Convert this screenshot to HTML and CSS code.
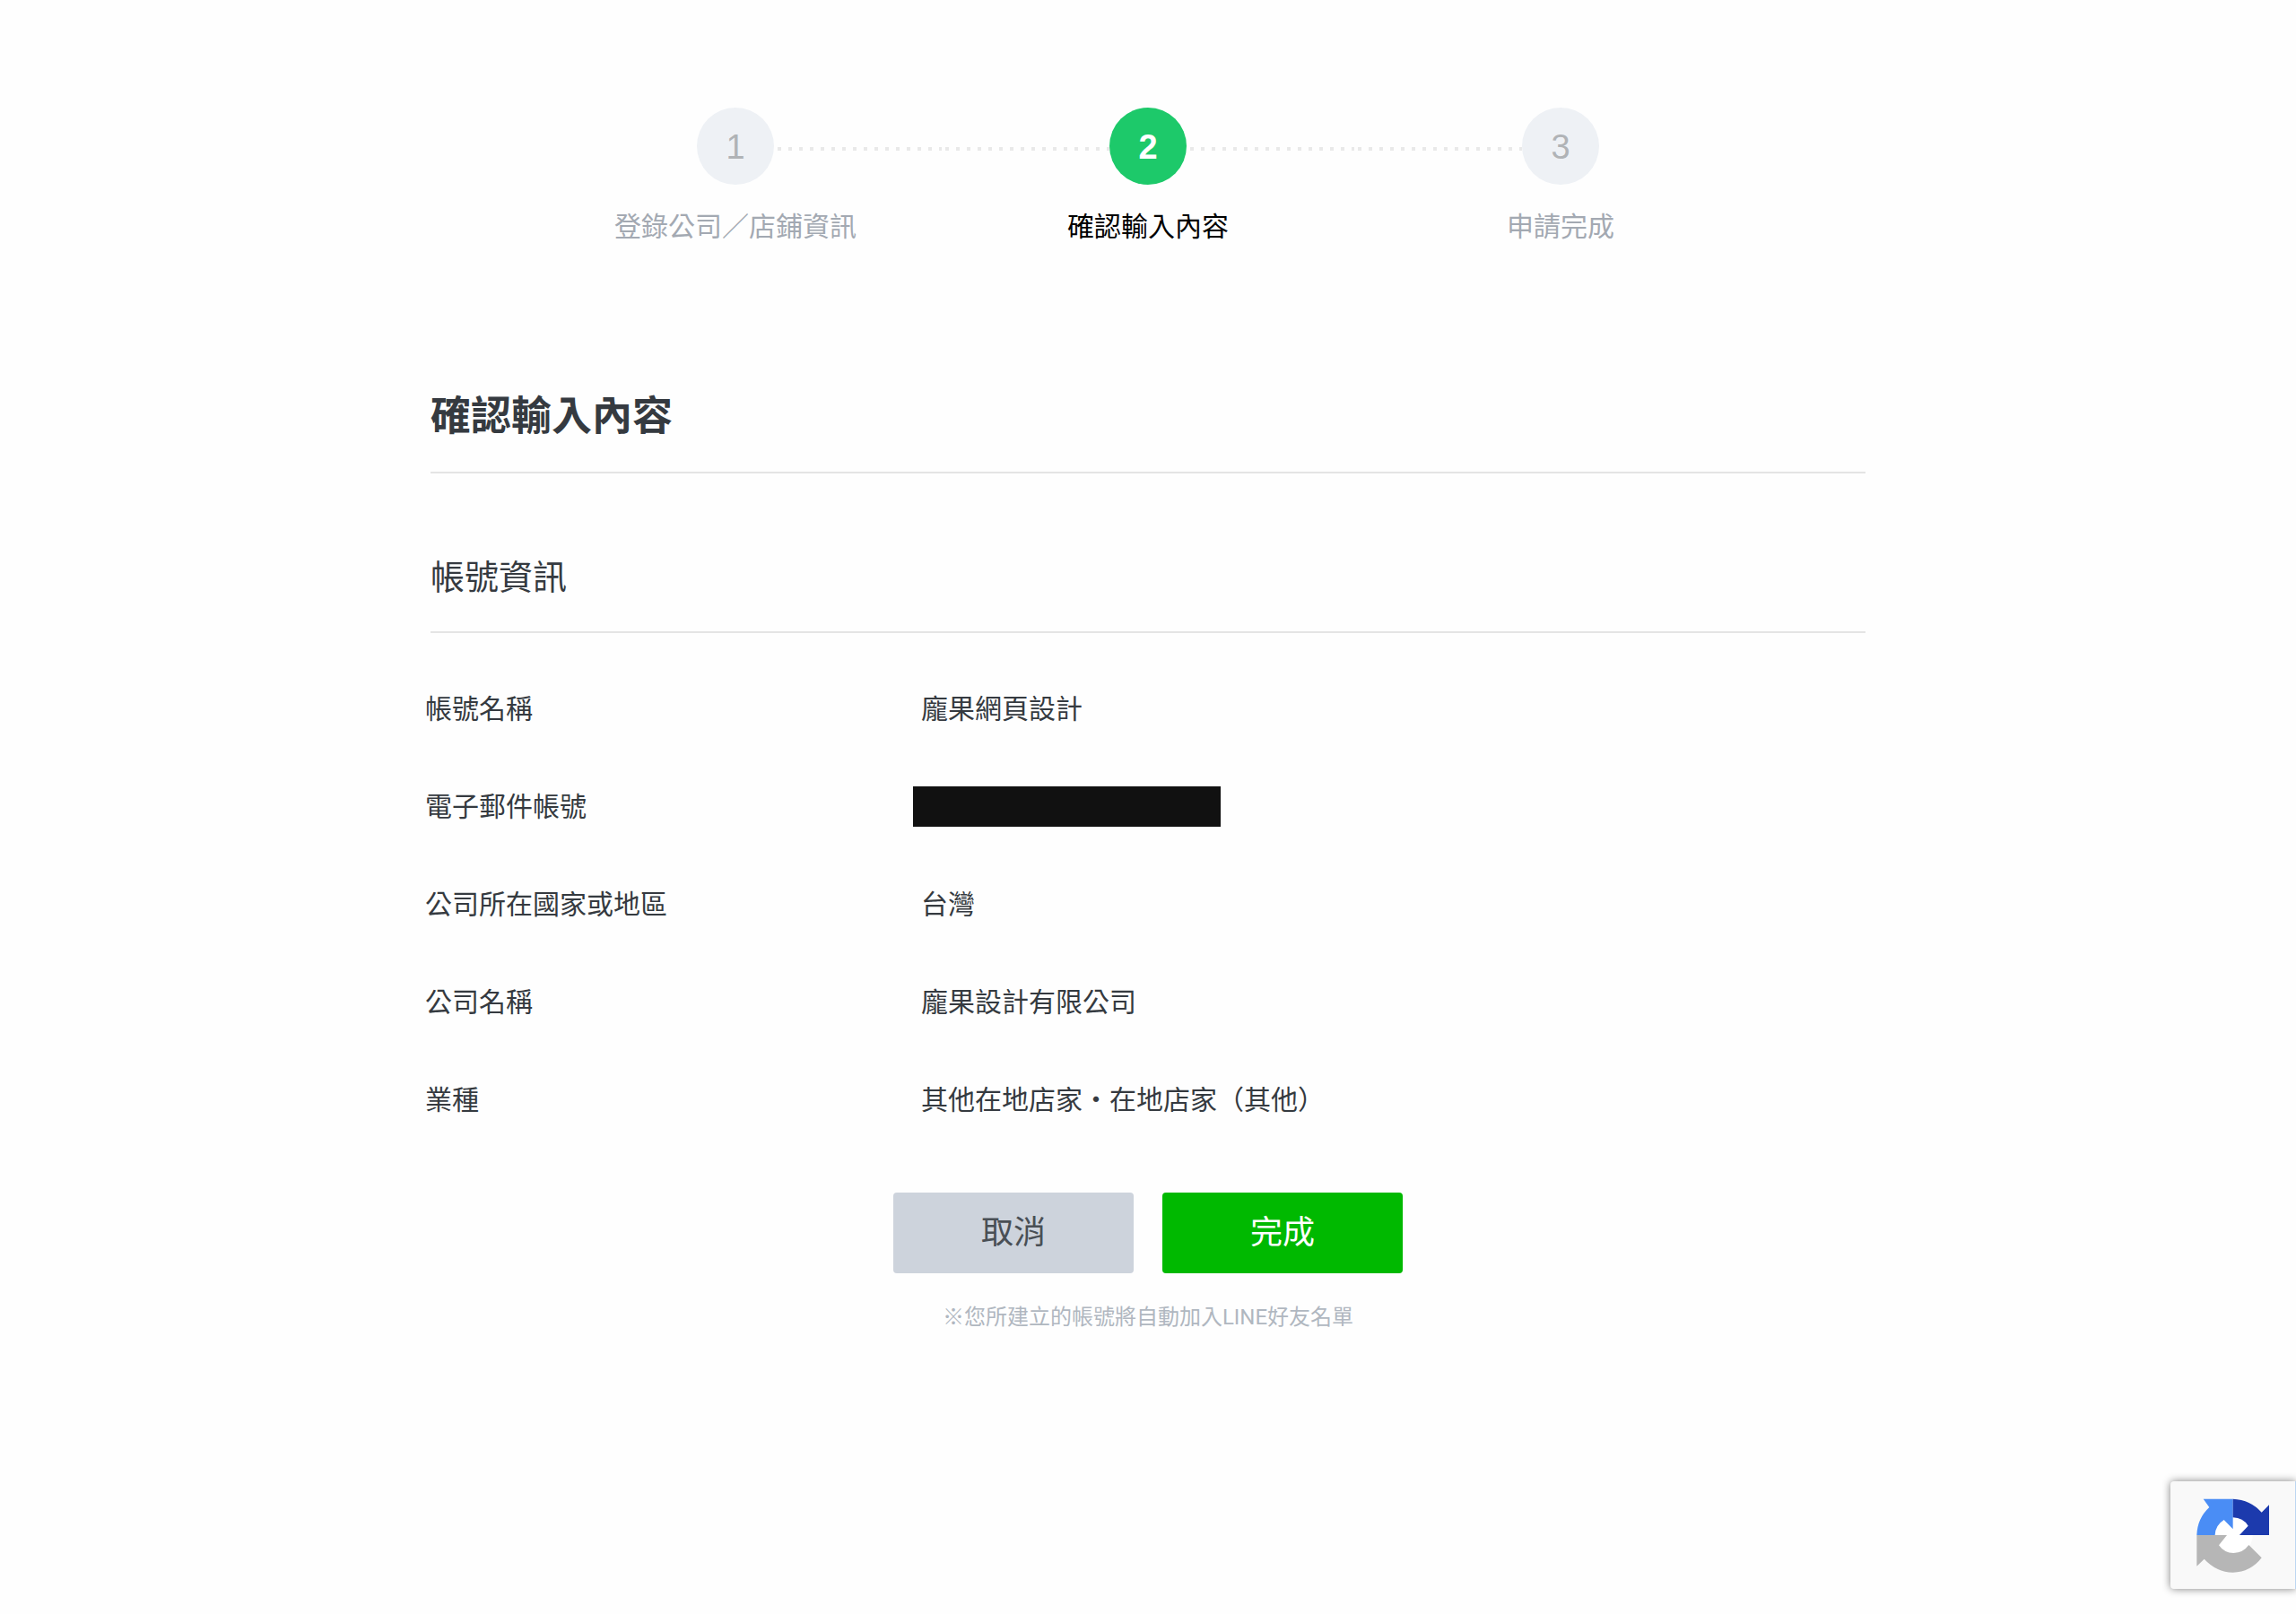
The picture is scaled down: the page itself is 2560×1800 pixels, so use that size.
FILE: index.html
```
<!DOCTYPE html>
<html lang="zh-Hant">
<head>
<meta charset="utf-8">
<meta name="viewport" content="width=device-width, initial-scale=1.0">
<title>確認輸入內容</title>
<link rel="stylesheet" href="styles.css">
</head>
<body>

<div class="container">
  <ol class="steps">
    <li class="step">
      <div class="step-mark"><span class="step-num">1</span></div>
      <p class="step-name">登錄公司／店鋪資訊</p>
    </li>
    <li class="step active">
      <div class="step-mark"><span class="step-num">2</span></div>
      <p class="step-name">確認輸入內容</p>
    </li>
    <li class="step">
      <div class="step-mark"><span class="step-num">3</span></div>
      <p class="step-name">申請完成</p>
    </li>
  </ol>

  <h1>確認輸入內容</h1>
  <h2>帳號資訊</h2>

  <table class="info">
    <tr>
      <th scope="row">帳號名稱</th>
      <td>龐果網頁設計</td>
    </tr>
    <tr>
      <th scope="row">電子郵件帳號</th>
      <td class="masked"><div class="mask"></div></td>
    </tr>
    <tr>
      <th scope="row">公司所在國家或地區</th>
      <td>台灣</td>
    </tr>
    <tr>
      <th scope="row">公司名稱</th>
      <td>龐果設計有限公司</td>
    </tr>
    <tr>
      <th scope="row">業種</th>
      <td>其他在地店家・在地店家（其他）</td>
    </tr>
  </table>

  <form class="buttons">
    <button class="button cancel" type="button">取消</button>
    <button class="button done" type="button">完成</button>
  </form>
  <p class="note">※您所建立的帳號將自動加入LINE好友名單</p>
</div>

<div class="recaptcha">
  <svg width="82" height="83" viewBox="148 123 246 249" aria-hidden="true">
    <circle cx="270" cy="247" r="66" fill="#fff"/>
    <path fill="#4a8df5" d="M171 125H270V226L240 195Q211 213 210 246H149Q151 190 191 153Z"/>
    <path fill="#1c3aad" d="M270 125Q329 128 366 170L391 145V246H292L321 215Q304 188 270 187Z"/>
    <path fill="#b6b6b6" d="M149 246H250L223 280Q241 306 272 306Q305 305 323 279L366 322Q329 370 270 371Q215 370 174 326L149 350Z"/>
  </svg>
</div>

</body>
</html>
```

FILE: styles.css
```
* {
  box-sizing: border-box;
}

body {
  margin: 0;
  background-color: #fefefe;
  color: #353a40;
  font-family: Roboto, "Noto Sans CJK TC", sans-serif;
  font-size: 30px;
  line-height: 44px;
}

.container {
  max-width: 1600px;
  margin: 0 auto;
  padding: 120px 0 60px;
}

/* Steps */
.steps {
  display: flex;
  justify-content: center;
  margin: 0 0 156px;
  padding: 0;
  list-style: none;
}

.step {
  flex: 0 1 460px;
  color: #a3a9b2;
  text-align: center;
}

.step-mark {
  display: flex;
  align-items: center;
}

/* dotted line on both sides of the circle */
.step-mark:before,
.step-mark:after {
  content: "";
  flex: 1;
  height: 4px;
  margin-top: 6px;
  background: repeating-linear-gradient(to right, transparent 0 4px, #e9e9e9 4px 8px, transparent 8px 12px);
}

.step:first-child .step-mark:before,
.step:last-child .step-mark:after {
  visibility: hidden;
}

.step-num {
  width: 86px;
  height: 86px;
  border-radius: 50%;
  background-color: #eef1f5;
  color: #b0b3b6;
  font-family: "Liberation Sans", Arial, sans-serif;
  font-size: 38px;
  line-height: 88px;
}

.step-name {
  margin: 25px 0 0;
}

.active {
  color: #000;
}

.active .step-num {
  background-color: #1dc96a;
  color: #fff;
  font-weight: bold;
}

/* Headings */
h1, h2 {
  margin: 0;
  border-bottom: 2px solid #e4e4e4;
}

h1 {
  padding-bottom: 28px;
  font-size: 45px;
  line-height: 67px;
}

h2 {
  padding: 88px 0 32px;
  font-size: 38px;
  font-weight: normal;
  line-height: 56px;
}

/* Account info */
.info {
  width: 100%;
  margin: 30px -6px 0;
  border-collapse: collapse;
}

.info th,
.info td {
  height: 109px;
  padding: 0;
  font-weight: normal;
  text-align: left;
}

.info th {
  width: 34%;
}

.info td {
  padding-left: 9px;
}

.info .masked {
  padding-left: 0;
}

.mask {
  width: 343px;
  height: 45px;
  background-color: #111;
}

/* Buttons */
.buttons {
  display: flex;
  justify-content: center;
  gap: 32px;
  margin-top: 49px;
}

.button {
  width: 268px;
  height: 90px;
  padding: 0 0 8px;
  border: none;
  border-radius: 4px;
  font-family: inherit;
  font-size: 36px;
  cursor: pointer;
}

.cancel {
  background-color: #cdd3dc;
  color: #494f55;
}

.done {
  background-color: #00b900;
  color: #fff;
}

.note {
  margin: 27px 0 0;
  color: #b0b7c0;
  font-size: 24px;
  text-align: center;
}

/* Badge in the corner of the window */
.recaptcha {
  position: fixed;
  right: 0;
  bottom: 28px;
  width: 140px;
  height: 120px;
  padding: 19px 0 0 29px;
  border-right: 1px solid #bcd6f2;
  border-radius: 4px 0 0 4px;
  background-color: #f9f9f9;
  box-shadow: 0 0 10px #808080;
}
```
